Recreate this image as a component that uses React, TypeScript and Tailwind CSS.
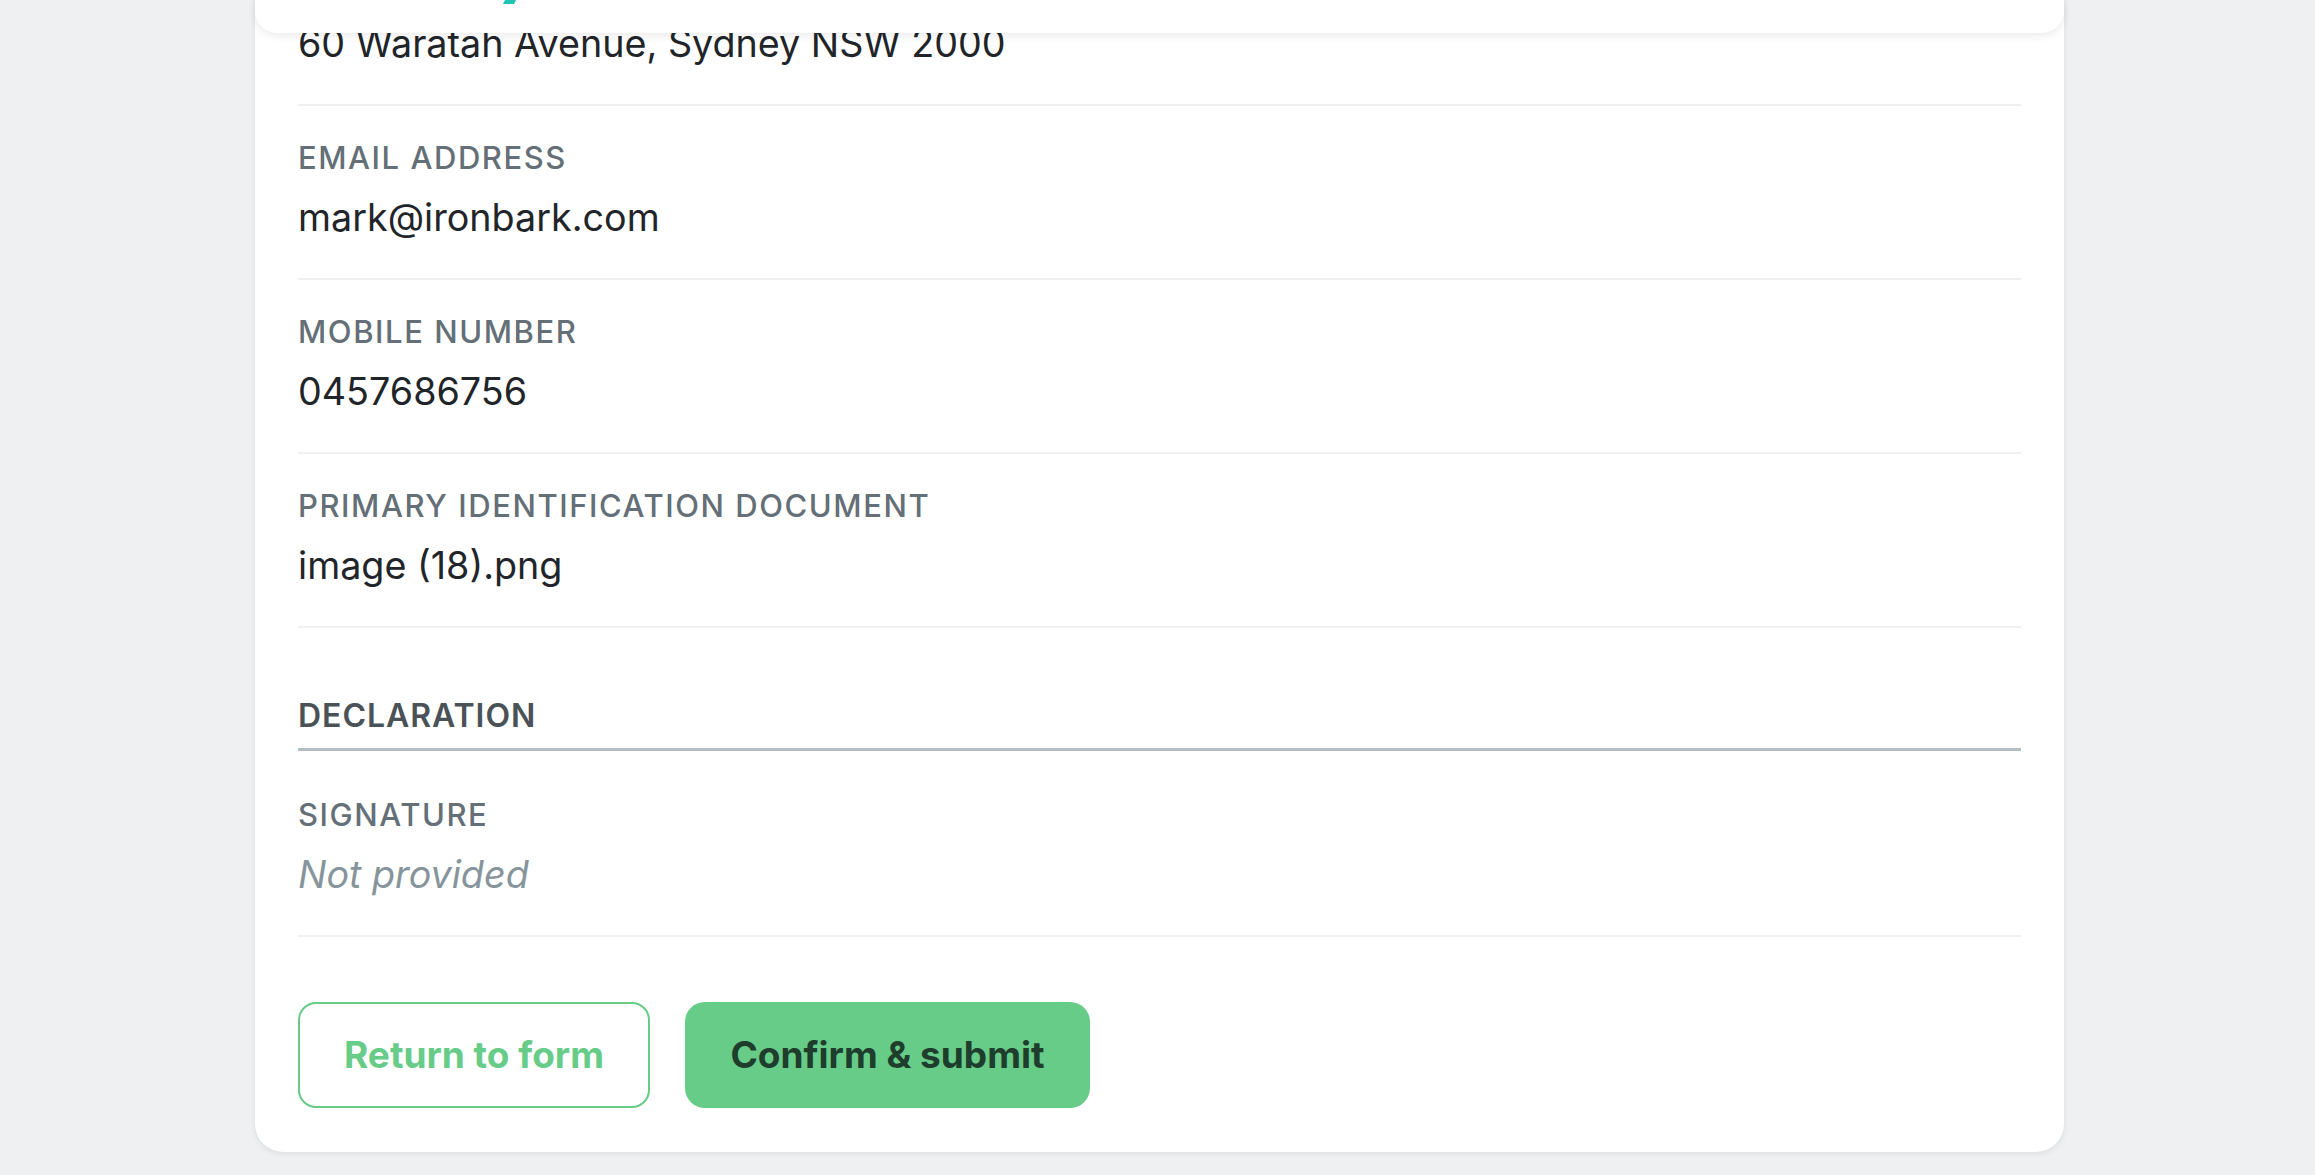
import React from "react";

const rows = [
  { label: "Email address", value: "mark@ironbark.com" },
  { label: "Mobile number", value: "0457686756" },
  { label: "Primary identification document", value: "image (18).png" },
];

const Row = ({ label, value, muted }: { label: string; value: string; muted?: boolean }) => {
  return (
    <div className="flex flex-col pt-[32px] pb-[37px] border-b-2 border-[#eef0f2]">
      <span className="text-[31px] leading-[40px] font-medium uppercase tracking-[0.05em] text-[#646f77]">
        {label}
      </span>
      <span
        className={
          muted
            ? "mt-[15px] text-[37.7px] leading-[48px] italic text-[#86949b]"
            : "mt-[15px] text-[37.7px] leading-[48px] text-[#212529]"
        }
      >
        {value}
      </span>
    </div>
  );
};

const App = () => {
  return (
    <div
      className="relative h-[1175px] overflow-hidden bg-[#eff0f2]"
      style={{ fontFamily: "Inter, 'Noto Sans', sans-serif" }}
    >
      {/* sticky header, mostly scrolled off */}
      <div className="absolute top-0 left-[255px] z-10 h-[33px] w-[1809px] rounded-b-[22px] bg-white shadow-[0_3px_8px_rgba(0,0,0,0.08)]">
        <svg className="absolute left-[247px] top-0" width="14" height="4" viewBox="0 0 14 4">
          <path d="M3 0 L14 0 L12 4 L1 4 Z" fill="#21c4b4" />
        </svg>
      </div>

      <div className="ml-[255px] mt-[-40px] w-[1809px] rounded-[28px] bg-white px-[43px] pb-[44px] shadow-[0_2px_6px_rgba(0,0,0,0.08)]">
        <div className="flex flex-col pt-[59px] pb-[37px] border-b-2 border-[#eef0f2]">
          <span className="text-[37.7px] leading-[48px] text-[#212529]">
            60 Waratah Avenue, Sydney NSW 2000
          </span>
        </div>
        {rows.map((r) => (
          <Row key={r.label} label={r.label} value={r.value} />
        ))}

        <div className="mt-[68px] border-b-[3px] border-[#b3bdc4] pb-[12px]">
          <span className="text-[32px] leading-[40px] font-semibold uppercase tracking-[0.03em] text-[#4a5257]">
            Declaration
          </span>
        </div>
        <div className="pt-[12px]">
          <Row label="Signature" value="Not provided" muted />
        </div>

        <div className="mt-[65px] flex gap-[35px]">
          <button className="h-[106px] w-[352px] rounded-[18px] border-2 border-[#66cc88] bg-white text-[37px] font-bold text-[#66cc88]">
            Return to form
          </button>
          <button className="h-[106px] w-[405px] rounded-[20px] bg-[#66cc88] text-[37px] font-bold text-[#1f3d2c]">
            Confirm &amp; submit
          </button>
        </div>
      </div>
    </div>
  );
};

export default App;
